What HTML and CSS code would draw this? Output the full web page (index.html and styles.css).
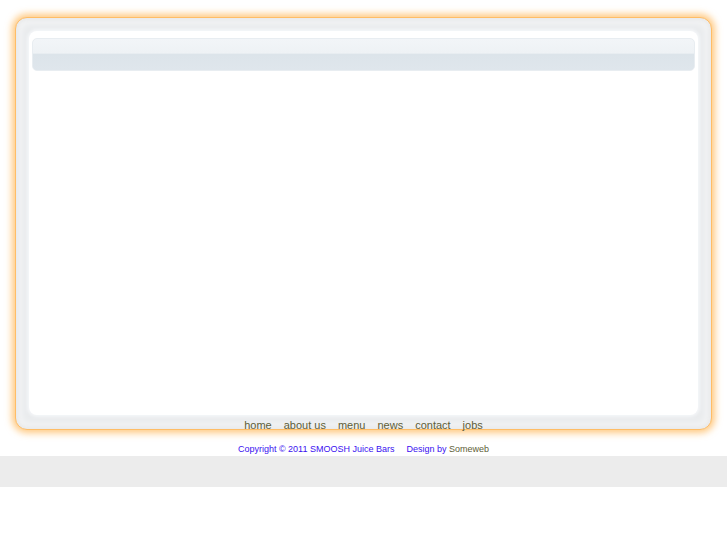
FILE: index.html
```html
<!DOCTYPE html>
<html>
<head>
<meta charset="utf-8">
<link rel="stylesheet" href="styles.css">
</head>
<body>
<div class="frame">
  <div class="inner">
    <div class="navbar"></div>
  </div>
  <nav class="links">
    <a href="#">home</a>
    <a href="#">about us</a>
    <a href="#">menu</a>
    <a href="#">news</a>
    <a href="#">contact</a>
    <a href="#">jobs</a>
  </nav>
</div>
<div class="copyright">
  <span>Copyright © 2011 SMOOSH Juice Bars</span>
  <span>Design by <a href="#">Someweb</a></span>
</div>
<div class="band"></div>
</body>
</html>
```
FILE: styles.css
```css
html, body {
  margin: 0;
  padding: 0;
  background: #ffffff;
  font-family: "Liberation Sans", Arial, sans-serif;
}
.frame {
  margin: 17px 15px 0;
  height: 413px;
  box-sizing: border-box;
  border-radius: 12px;
  border: 1px solid #ffbd66;
  background: #e9ebed;
  box-shadow: 0 0 7px 3px rgba(255, 165, 45, 0.6), inset 0 0 4px 2px rgba(0, 0, 0, 0.06), inset 0 0 10px 4px rgba(255,255,255,0.7);
  padding: 13px 13px 0;
  display: flex;
  flex-direction: column;
}
.inner {
  flex: 1;
  background: #ffffff;
  border-radius: 8px;
  box-shadow: 0 0 3px 2px rgba(244, 246, 248, 1);
  padding: 7px 3px 0;
}
.navbar {
  height: 33px;
  box-sizing: border-box;
  border-radius: 5px;
  border: 1px solid #e8edf1;
  background: linear-gradient(to bottom, #f2f5f8 0%, #eef2f5 45%, #dce4ea 50%, #dfe6ec 100%);
}
.links {
  height: 15px;
  display: flex;
  justify-content: center;
  gap: 12px;
  font-size: 11px;
  line-height: 15px;
  margin-bottom: -1px;
  position: relative;
  top: 3px;
}
.links a {
  color: #5e5e37;
  text-decoration: none;
}
.copyright {
  display: flex;
  justify-content: center;
  gap: 12px;
  margin-top: 14px;
  font-size: 9px;
  line-height: 11px;
  color: #3a10f0;
}
.copyright a {
  color: #5e5e37;
  text-decoration: none;
}
.band {
  margin-top: 1px;
  height: 31px;
  background: #ececec;
}
```
